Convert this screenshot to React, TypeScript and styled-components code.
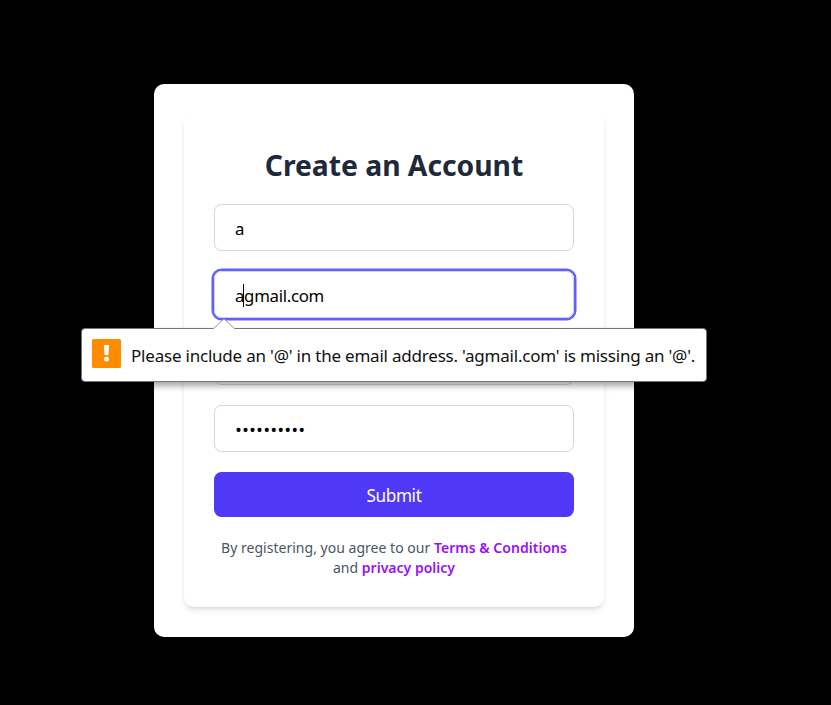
import React from "react";
import styled, { createGlobalStyle } from "styled-components";

const GlobalStyle = createGlobalStyle`
  * { box-sizing: border-box; }
  html, body { margin: 0; background: #000; }
  body { font-family: "Segoe UI", "Noto Sans", sans-serif; overflow: hidden; }
`;

const Page = styled.main`
  height: 705px;
  padding: 84px 0 0 154px;
  background: #000;
`;

const Panel = styled.section`
  width: 480px;
  height: 553px;
  padding: 30px;
  border-radius: 10px;
  background: #fff;
`;

const Form = styled.div`
  height: 493px;
  padding: 30px;
  display: flex;
  flex-direction: column;
  gap: 20px;
  border-radius: 10px;
  background: #fff;
  box-shadow: 0 4px 6px -1px rgba(0, 0, 0, 0.1), 0 2px 4px -2px rgba(0, 0, 0, 0.1);
`;

const Title = styled.h1`
  margin: 0;
  height: 40px;
  padding-top: 1px;
  font-size: 28.3px;
  line-height: 40px;
  letter-spacing: -0.03px;
  font-weight: 700;
  text-align: center;
  white-space: nowrap;
  color: #1e2939;
`;

const Field = styled.div<{ $focused?: boolean }>`
  position: relative;
  flex: none;
  height: 47px;
  padding: 2px 20px 0;
  display: flex;
  align-items: center;
  border: 1px solid #d1d5dc;
  border-radius: 7.5px;
  font-size: 16.8px;
  letter-spacing: -0.3px;
  color: #000;
  box-shadow: ${(p) => (p.$focused ? "0 0 0 2.5px #615fff" : "none")};
`;

const Caret = styled.span`
  position: absolute;
  left: 28px;
  top: 12px;
  width: 1px;
  height: 23px;
  background: #000;
`;

const Dots = styled.span`
  font-family: "Open Sans", sans-serif;
  font-size: 18.5px;
  letter-spacing: 0.08px;
`;

const Submit = styled.button`
  flex: none;
  height: 45px;
  padding: 1px 0 0;
  border: 0;
  border-radius: 7.5px;
  background: #4f39f6;
  color: #fff;
  font: 400 17.2px "Segoe UI", "Noto Sans", sans-serif;
  letter-spacing: -0.4px;
`;

const Terms = styled.p`
  margin: 0;
  padding-top: 1px;
  font-size: 14px;
  line-height: 20px;
  letter-spacing: 0.02px;
  text-align: center;
  white-space: nowrap;
  color: #4a5565;
`;

const Link = styled.span`
  font-weight: 600;
  color: #9810fa;
`;

const Bubble = styled.div`
  position: absolute;
  z-index: 2;
  left: -134px;
  top: 56px;
  width: 626px;
  height: 54px;
  padding: 0 10px;
  display: flex;
  align-items: center;
  gap: 10px;
  border: 1px solid #767676;
  border-radius: 4px;
  background: #fff;
  box-shadow: 0 4px 6px rgba(0, 0, 0, 0.35);
  font-size: 17px;
  letter-spacing: -0.21px;
  white-space: nowrap;
  color: #111;
`;

const Arrow = styled.svg`
  position: absolute;
  left: 131px;
  top: -10px;
`;

const Message = styled.span`
  padding-top: 1px;
`;

const Warning = styled.svg`
  flex: none;
  margin-top: -3px;
`;

export default function App() {
  return (
    <>
      <GlobalStyle />
      <Page>
        <Panel>
          <Form>
            <Title>Create an Account</Title>
            <Field>a</Field>
            <Field $focused>
              agmail.com
              <Caret />
              <Bubble role="alert">
                <Arrow width="22" height="11" viewBox="0 0 22 11">
                  <path d="M0 11V10L10 .5h2L22 10v1Z" fill="#fff" />
                  <path d="M0 9.5h.5L10.5.5h1l10 9h.5" fill="none" stroke="#999" />
                </Arrow>
                <Warning width="29" height="29" viewBox="0 0 29 29">
                  <rect width="29" height="29" rx="1.5" fill="#ff8c00" />
                  <path d="M12 6h5l-.5 10h-4z" fill="#fff" />
                  <circle cx="14.5" cy="20" r="2.5" fill="#fff" />
                </Warning>
                <Message>
                  Please include an '@' in the email address. 'agmail.com' is missing an '@'.
                </Message>
              </Bubble>
            </Field>
            <Field />
            <Field>
              <Dots>••••••••••</Dots>
            </Field>
            <Submit>Submit</Submit>
            <Terms>
              By registering, you agree to our <Link>Terms &amp; Conditions</Link>
              <br />
              and <Link>privacy policy</Link>
            </Terms>
          </Form>
        </Panel>
      </Page>
    </>
  );
}
